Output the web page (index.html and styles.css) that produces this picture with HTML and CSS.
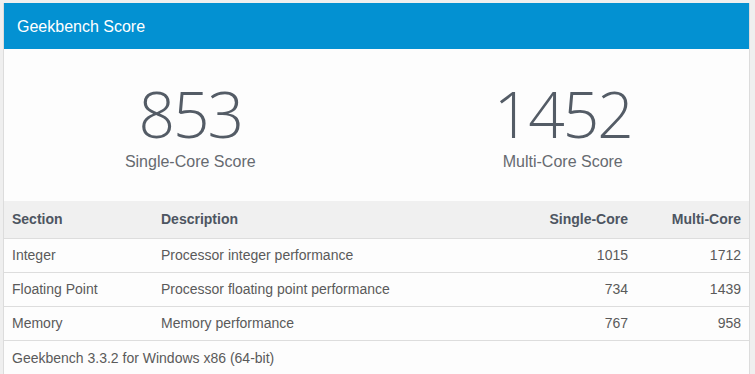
FILE: index.html
```html
<!DOCTYPE html>
<html>
<head>
<meta charset="utf-8">
<link rel="stylesheet" href="styles.css">
</head>
<body>
<div class="card">
  <div class="card-header">Geekbench Score</div>
  <div class="scores">
    <div class="score">
      <div class="score-value">853</div>
      <div class="score-label">Single-Core Score</div>
    </div>
    <div class="score">
      <div class="score-value">1452</div>
      <div class="score-label">Multi-Core Score</div>
    </div>
  </div>
  <table class="results">
    <thead>
      <tr>
        <th class="col-section">Section</th>
        <th class="col-desc">Description</th>
        <th class="num">Single-Core</th>
        <th class="num col-multi">Multi-Core</th>
      </tr>
    </thead>
    <tbody>
      <tr><td>Integer</td><td>Processor integer performance</td><td class="num">1015</td><td class="num">1712</td></tr>
      <tr><td>Floating Point</td><td>Processor floating point performance</td><td class="num">734</td><td class="num">1439</td></tr>
      <tr><td>Memory</td><td>Memory performance</td><td class="num">767</td><td class="num">958</td></tr>
    </tbody>
  </table>
  <div class="card-footer">Geekbench 3.3.2 for Windows x86 (64-bit)</div>
</div>
</body>
</html>
```

FILE: styles.css
```css
html, body {
  margin: 0;
  padding: 0;
}
body {
  background: #efefef;
  font-family: "Liberation Sans", Arial, sans-serif;
  color: #5a5a5a;
  overflow: hidden;
}
.card {
  margin: 3px 5px 0 3px;
  background: #fdfdfd;
  border: 1px solid #dcdcdc;
  border-top: 0;
  min-height: 400px;
}
.card-header {
  background: #0391d2;
  color: #ffffff;
  font-size: 16px;
  height: 46px;
  line-height: 47px;
  padding-left: 13px;
}
.scores {
  display: grid;
  grid-template-columns: 1fr 1fr;
  height: 152px;
  box-sizing: border-box;
  padding-top: 37px;
}
.score {
  text-align: center;
}
.score-value {
  font-family: "Open Sans", sans-serif;
  font-weight: 300;
  font-size: 64px;
  line-height: 56px;
  letter-spacing: -2px;
  color: #545c66;
}
.score-label {
  font-size: 16px;
  line-height: 20px;
  color: #666a70;
  margin-top: 10px;
}
.results {
  width: 100%;
  border-collapse: collapse;
  font-size: 14px;
}
.results th {
  background: #f0f0f0;
  color: #4d5561;
  font-weight: bold;
  text-align: left;
  height: 37px;
  padding: 0 8px;
  border-bottom: 1px solid #dddddd;
  box-sizing: border-box;
}
.results td {
  height: 34px;
  padding: 0 8px;
  border-bottom: 1px solid #dddddd;
  box-sizing: border-box;
  color: #5a5a5a;
}
.results .num {
  text-align: right;
}
.col-section {
  width: 149px;
}
.col-multi {
  width: 113px;
}
.card-footer {
  font-size: 14px;
  padding: 0 8px;
  height: 34px;
  line-height: 34px;
  color: #5a5a5a;
}
```
